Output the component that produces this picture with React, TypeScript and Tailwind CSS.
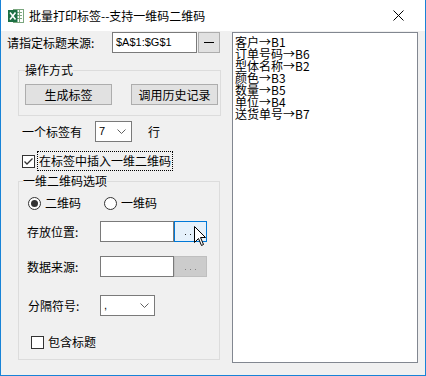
import React from "react";

const F = "font-['Noto_Sans_CJK_SC',sans-serif]";

function Btn({ w, children, variant = "normal" }: { w: number; children: React.ReactNode; variant?: "normal" | "hot" | "disabled" }) {
  const cls =
    variant === "hot"
      ? "bg-[#e5f1fb] border-[#0078d7]"
      : variant === "disabled"
      ? "bg-[#cccccc] border-[#bfbfbf] text-[#838383]"
      : "bg-[#e1e1e1] border-[#adadad]";
  return (
    <div
      style={{ width: w }}
      className={`h-[21px] border ${cls} flex items-center justify-center text-[12px] leading-[12px] shrink-0`}
    >
      {children}
    </div>
  );
}

function Dots({ color }: { color: string }) {
  return (
    <div className="flex items-center gap-[4px] mt-[5px]">
      <span className="w-[1px] h-[1px]" style={{ background: color }} />
      <span className="w-[1px] h-[1px]" style={{ background: color }} />
      <span className="w-[1px] h-[1px]" style={{ background: color }} />
    </div>
  );
}

function Chevron() {
  return (
    <svg width="9" height="5" viewBox="0 0 9 5" className="shrink-0">
      <polyline points="0.5,0.5 4.5,4.5 8.5,0.5" fill="none" stroke="#606060" strokeWidth="1" />
    </svg>
  );
}

function Combo({ w, value }: { w: number; value: string }) {
  return (
    <div
      style={{ width: w }}
      className="h-[21px] bg-white border border-[#7a7a7a] flex items-center justify-between pl-[3px] pr-[5px] shrink-0"
    >
      <span className="font-['Liberation_Sans',sans-serif] text-[11px] leading-[11px]">{value}</span>
      <Chevron />
    </div>
  );
}

function CheckBox({ checked }: { checked: boolean }) {
  return (
    <div className="w-[13px] h-[13px] border border-[#333333] bg-white shrink-0 flex items-center justify-center">
      {checked && (
        <svg width="11" height="11" viewBox="0 0 11 11">
          <polyline points="1.5,5.5 4,8 9.5,2.5" fill="none" stroke="#333333" strokeWidth="1.3" />
        </svg>
      )}
    </div>
  );
}

function Radio({ checked }: { checked: boolean }) {
  return (
    <div className="w-[13px] h-[13px] rounded-full border border-[#333333] bg-white shrink-0 flex items-center justify-center">
      {checked && <div className="w-[7px] h-[7px] rounded-full bg-[#333333]" />}
    </div>
  );
}

function Input({ w, children }: { w: number; children?: React.ReactNode }) {
  return (
    <div style={{ width: w }} className="h-[21px] bg-white border border-[#7a7a7a] shrink-0 flex items-center pl-[2px]">
      {children}
    </div>
  );
}

function ExcelIcon() {
  return (
    <svg width="16" height="16" viewBox="0 0 16 16" className="shrink-0">
      <rect x="5.5" y="1.5" width="10" height="13" fill="#ffffff" stroke="#7ba77f" />
      <line x1="9" y1="4.5" x2="14" y2="4.5" stroke="#7ba77f" />
      <line x1="9" y1="7.5" x2="14" y2="7.5" stroke="#7ba77f" />
      <line x1="9" y1="10.5" x2="14" y2="10.5" stroke="#7ba77f" />
      <line x1="11.5" y1="2" x2="11.5" y2="14" stroke="#7ba77f" />
      <rect x="0" y="2" width="9.5" height="12" fill="#1d7044" />
      <path d="M2,4.5 L7.5,11.5 M7.5,4.5 L2,11.5" stroke="#ffffff" strokeWidth="1.6" />
    </svg>
  );
}

function Cursor() {
  return (
    <svg width="13" height="21" viewBox="0 0 13 21" className="absolute left-[20px] top-[5px]">
      <path d="M0.5,0.5 L0.5,16.5 L4.5,12.5 L7.5,19.5 L9.5,18.5 L6.5,11.5 L11.5,11.5 Z" fill="#ffffff" stroke="#000000" strokeWidth="1" />
    </svg>
  );
}

export default function App() {
  const items = ["客户→B1", "订单号码→B6", "型体名称→B2", "颜色→B3", "数量→B5", "单位→B4", "送货单号→B7"];
  return (
    <div className={`w-[426px] h-[376px] bg-[#f0f0f0] border-x border-b border-[#1883d7] flex flex-col text-black ${F}`}>
      {/* title bar */}
      <div className="h-[31px] bg-white flex items-center shrink-0">
        <div className="ml-[7px]">
          <ExcelIcon />
        </div>
        <span className="ml-[5px] text-[12px] leading-[12px]">批量打印标签--支持一维码二维码</span>
        <div className="ml-auto mr-[21px]">
          <svg width="11" height="11" viewBox="0 0 11 11">
            <path d="M0.5,0.5 L10.5,10.5 M10.5,0.5 L0.5,10.5" stroke="#000000" strokeWidth="1" />
          </svg>
        </div>
      </div>

      {/* body */}
      <div className="flex flex-1">
        {/* left column */}
        <div className="w-[231px] flex flex-col text-[12px] leading-[12px]">
          {/* row 1 */}
          <div className="mt-[1px] h-[21px] flex items-center pl-[6px]">
            <span className="w-[105px] shrink-0">请指定标题来源:</span>
            <Input w={85}>
              <span className="font-['Liberation_Sans',sans-serif] text-[11px] leading-[11px] ml-[1px]">$A$1:$G$1</span>
            </Input>
            <div className="ml-[1px]">
              <Btn w={22}>
                <span className="w-[10px] h-[1px] bg-black" />
              </Btn>
            </div>
          </div>

          {/* group 1 */}
          <fieldset className="mt-[11px] ml-[17px] w-[203px] border border-[#dcdcdc] pl-[6px] pb-[10px]">
            <legend className="leading-[12px] h-[12px]">操作方式</legend>
            <div className="mt-[8px] flex gap-[19px]">
              <Btn w={87}>生成标签</Btn>
              <Btn w={87}>调用历史记录</Btn>
            </div>
          </fieldset>

          {/* rows per label */}
          <div className="mt-[5px] h-[21px] flex items-center pl-[21px]">
            <span className="w-[73px] shrink-0">一个标签有</span>
            <Combo w={37} value="7" />
            <span className="ml-[16px]">行</span>
          </div>

          {/* insert barcode checkbox */}
          <div className="mt-[9px] h-[20px] flex items-center pl-[21px]">
            <CheckBox checked />
            <div className="ml-[2px] h-[20px] border border-dotted border-black flex items-center px-[1px]">
              在标签中插入一维二维码
            </div>
          </div>

          {/* group 2 */}
          <fieldset className="mt-[4px] ml-[17px] w-[202px] border border-[#dcdcdc] pl-[4px] pb-[10px]">
            <legend className="leading-[12px] h-[12px]">一维二维码选项</legend>
            <div className="mt-[9px] h-[14px] flex items-center pl-[5px]">
              <Radio checked />
              <span className="ml-[4px] w-[59px]">二维码</span>
              <Radio checked={false} />
              <span className="ml-[4px]">一维码</span>
            </div>

            <div className="mt-[11px] h-[21px] flex items-center pl-[4px]">
              <span className="w-[73px] shrink-0">存放位置:</span>
              <Input w={74} />
              <div className="relative">
                <Btn w={33} variant="hot">
                  <Dots color="#222222" />
                </Btn>
                <Cursor />
              </div>
            </div>

            <div className="mt-[14px] h-[21px] flex items-center pl-[4px]">
              <span className="w-[73px] shrink-0">数据来源:</span>
              <Input w={74} />
              <Btn w={33} variant="disabled">
                <Dots color="#838383" />
              </Btn>
            </div>

            <div className="mt-[18px] h-[21px] flex items-center pl-[5px]">
              <span className="w-[72px] shrink-0">分隔符号:</span>
              <Combo w={55} value="," />
            </div>

            <div className="mt-[19px] h-[14px] flex items-center pl-[8px]">
              <CheckBox checked={false} />
              <span className="ml-[4px]">包含标题</span>
            </div>
          </fieldset>
        </div>

        {/* right list */}
        <div className="mt-[1px] w-[186px] h-[331px] bg-white border border-[#828790] pl-[2px] pt-[3px] flex flex-col text-[12px] leading-[12px]">
          {items.map((t) => (
            <div key={t} className="h-[12px] whitespace-nowrap">
              {t}
            </div>
          ))}
        </div>
      </div>
    </div>
  );
}
